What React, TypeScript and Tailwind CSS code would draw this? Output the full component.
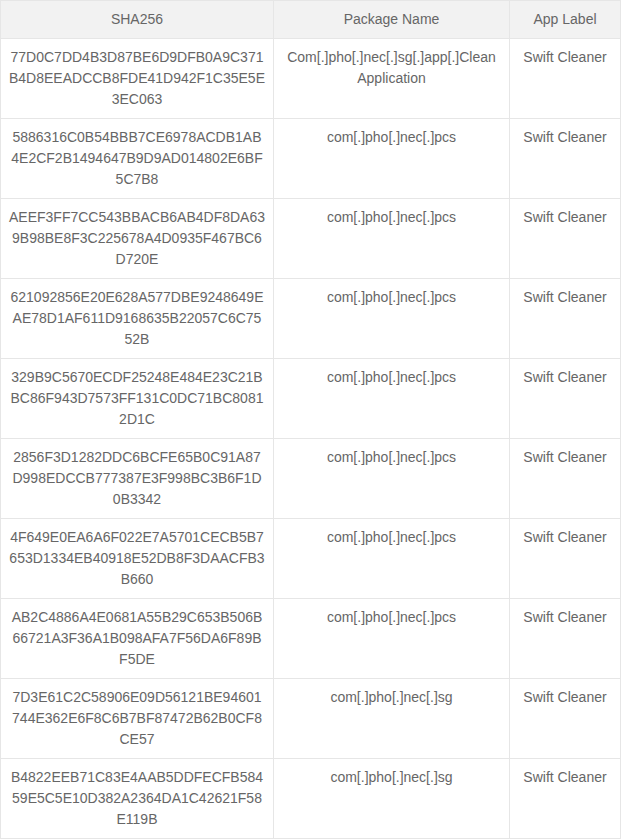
import React from "react";

const rows: [string, string, string][] = [
  ["77D0C7DD4B3D87BE6D9DFB0A9C371B4D8EEADCCB8FDE41D942F1C35E5E3EC063", "Com[.]pho[.]nec[.]sg[.]app[.]Clean Application", "Swift Cleaner"],
  ["5886316C0B54BBB7CE6978ACDB1AB4E2CF2B1494647B9D9AD014802E6BF5C7B8", "com[.]pho[.]nec[.]pcs", "Swift Cleaner"],
  ["AEEF3FF7CC543BBACB6AB4DF8DA639B98BE8F3C225678A4D0935F467BC6D720E", "com[.]pho[.]nec[.]pcs", "Swift Cleaner"],
  ["621092856E20E628A577DBE9248649EAE78D1AF611D9168635B22057C6C7552B", "com[.]pho[.]nec[.]pcs", "Swift Cleaner"],
  ["329B9C5670ECDF25248E484E23C21BBC86F943D7573FF131C0DC71BC80812D1C", "com[.]pho[.]nec[.]pcs", "Swift Cleaner"],
  ["2856F3D1282DDC6BCFE65B0C91A87D998EDCCB777387E3F998BC3B6F1D0B3342", "com[.]pho[.]nec[.]pcs", "Swift Cleaner"],
  ["4F649E0EA6A6F022E7A5701CECB5B7653D1334EB40918E52DB8F3DAACFB3B660", "com[.]pho[.]nec[.]pcs", "Swift Cleaner"],
  ["AB2C4886A4E0681A55B29C653B506B66721A3F36A1B098AFA7F56DA6F89BF5DE", "com[.]pho[.]nec[.]pcs", "Swift Cleaner"],
  ["7D3E61C2C58906E09D56121BE94601744E362E6F8C6B7BF87472B62B0CF8CE57", "com[.]pho[.]nec[.]sg", "Swift Cleaner"],
  ["B4822EEB71C83E4AAB5DDFECFB58459E5C5E10D382A2364DA1C42621F58E119B", "com[.]pho[.]nec[.]sg", "Swift Cleaner"],
];

export default function App() {
  return (
    <div className="bg-white w-[622px] min-h-[839px]" style={{ fontFamily: '"Liberation Sans", Arial, sans-serif' }}>
      <table className="w-[620px] border-collapse table-fixed text-[14px] leading-[21px] text-[#666]">
        <colgroup>
          <col className="w-[273px]" />
          <col className="w-[236px]" />
          <col className="w-[111px]" />
        </colgroup>
        <thead>
          <tr className="bg-[#f2f2f2] h-[38px]">
            <th className="font-normal text-center border border-[#e6e6e6] px-[7.75px] text-[#666]">SHA256</th>
            <th className="font-normal text-center border border-[#e6e6e6] px-[7.75px] text-[#666]">Package Name</th>
            <th className="font-normal text-center border border-[#e6e6e6] px-[7.75px] text-[#666]">App Label</th>
          </tr>
        </thead>
        <tbody>
          {rows.map((r, i) => (
            <tr key={i} className="h-[80px]">
              <td className="align-top text-center border border-[#e6e6e6] px-[7.75px] pt-[8px] pb-[8px] break-all">{r[0]}</td>
              <td className="align-top text-center border border-[#e6e6e6] px-[7.75px] pt-[8px] pb-[8px]">{r[1]}</td>
              <td className="align-top text-center border border-[#e6e6e6] px-[7.75px] pt-[8px] pb-[8px]">{r[2]}</td>
            </tr>
          ))}
        </tbody>
      </table>
    </div>
  );
}
